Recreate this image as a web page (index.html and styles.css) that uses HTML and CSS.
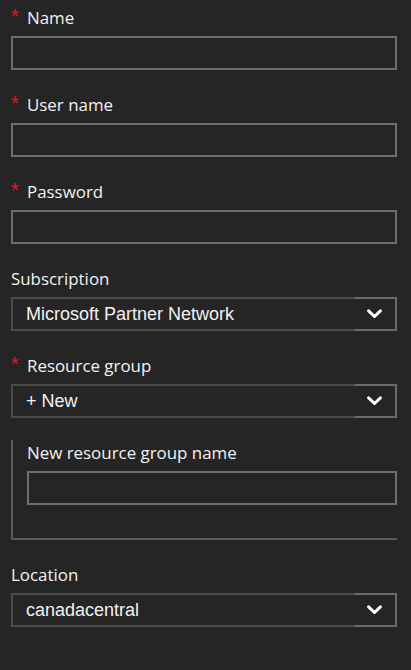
FILE: index.html
```html
<!DOCTYPE html>
<html>
<head>
<meta charset="utf-8">
<link rel="stylesheet" href="styles.css">
</head>
<body>
<div class="form">
  <div class="field">
    <div class="label"><span class="req">*</span>Name</div>
    <div class="input"></div>
  </div>
  <div class="field">
    <div class="label"><span class="req">*</span>User name</div>
    <div class="input"></div>
  </div>
  <div class="field">
    <div class="label"><span class="req">*</span>Password</div>
    <div class="input"></div>
  </div>
  <div class="field">
    <div class="label">Subscription</div>
    <div class="select"><span class="value">Microsoft Partner Network</span><span class="chev"><svg width="15" height="10" viewBox="0 0 15 10"><path d="M1.6 1.8 L7.5 7.5 L13.4 1.8" fill="none" stroke="#fff" stroke-width="3" stroke-linecap="round" stroke-linejoin="round"/></svg></span></div>
  </div>
  <div class="field">
    <div class="label"><span class="req">*</span>Resource group</div>
    <div class="select"><span class="value">+ New</span><span class="chev"><svg width="15" height="10" viewBox="0 0 15 10"><path d="M1.6 1.8 L7.5 7.5 L13.4 1.8" fill="none" stroke="#fff" stroke-width="3" stroke-linecap="round" stroke-linejoin="round"/></svg></span></div>
  </div>
  <div class="nested">
    <div class="label">New resource group name</div>
    <div class="input"></div>
  </div>
  <div class="field">
    <div class="label">Location</div>
    <div class="select"><span class="value">canadacentral</span><span class="chev"><svg width="15" height="10" viewBox="0 0 15 10"><path d="M1.6 1.8 L7.5 7.5 L13.4 1.8" fill="none" stroke="#fff" stroke-width="3" stroke-linecap="round" stroke-linejoin="round"/></svg></span></div>
  </div>
</div>
</body>
</html>
```
FILE: styles.css
```css
html, body {
  margin: 0;
  padding: 0;
  background: #252525;
}
body {
  width: 411px;
  height: 670px;
  overflow: hidden;
  color: #f2f2f2;
  font-family: "Open Sans", "Noto Sans", sans-serif;
}
.form {
  padding: 6px 14px 0 11px;
  display: flex;
  flex-direction: column;
}
.field {
  display: flex;
  flex-direction: column;
  gap: 6px;
  margin-bottom: 23px;
}
.label {
  height: 24px;
  line-height: 24px;
  font-size: 16.9px;
  display: flex;
  align-items: center;
  white-space: nowrap;
}
.req {
  color: #e81123;
  font-family: "Liberation Sans", Arial, sans-serif;
  font-size: 20px;
  width: 16px;
  height: 24px;
  line-height: 24px;
  margin-top: -4px;
}
.input {
  height: 34px;
  box-sizing: border-box;
  border: 2px solid #6e6e6e;
  background: #252525;
}
.select {
  height: 34px;
  box-sizing: border-box;
  border: 2px solid #4b4b4b;
  display: flex;
  align-items: center;
  justify-content: space-between;
}
.value {
  padding-left: 13px;
  font-family: "Liberation Sans", Arial, sans-serif;
  font-size: 18px;
  color: #f2f2f2;
}
.chev {
  align-self: stretch;
  margin: -2px -2px -2px 0;
  width: 38px;
  border: 2px solid #6a6a6a;
  border-left: none;
  display: flex;
  align-items: center;
  justify-content: center;
  padding-right: 2px;
}
.chev svg {
  display: block;
}
.nested {
  display: flex;
  flex-direction: column;
  gap: 6px;
  border-left: 2px solid #5a5a5a;
  border-bottom: 2px solid #5a5a5a;
  padding: 1px 0 33px 14px;
  margin-top: -1px;
  margin-bottom: 23px;
}
```
